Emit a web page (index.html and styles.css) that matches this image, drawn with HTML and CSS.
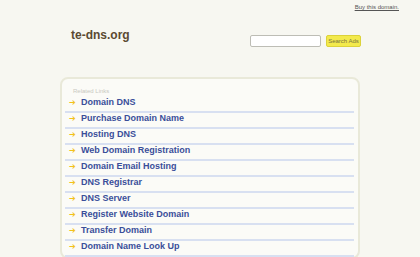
FILE: index.html
```html
<!DOCTYPE html>
<html>
<head>
<meta charset="utf-8">
<link rel="stylesheet" href="styles.css">
</head>
<body>
<div class="topbar"><a href="#" class="buy">Buy this domain.</a></div>
<div class="header">
  <h1 class="title">te-dns.org</h1>
  <form class="search">
    <input class="search-input" type="text">
    <button class="search-btn" type="button">Search Ads</button>
  </form>
</div>
<div class="box">
  <div class="related">Related Links</div>
  <ul class="links">
    <li class="link"><span class="arrow">➔</span><a href="#">Domain DNS</a></li>
    <li class="link"><span class="arrow">➔</span><a href="#">Purchase Domain Name</a></li>
    <li class="link"><span class="arrow">➔</span><a href="#">Hosting DNS</a></li>
    <li class="link"><span class="arrow">➔</span><a href="#">Web Domain Registration</a></li>
    <li class="link"><span class="arrow">➔</span><a href="#">Domain Email Hosting</a></li>
    <li class="link"><span class="arrow">➔</span><a href="#">DNS Registrar</a></li>
    <li class="link"><span class="arrow">➔</span><a href="#">DNS Server</a></li>
    <li class="link"><span class="arrow">➔</span><a href="#">Register Website Domain</a></li>
    <li class="link"><span class="arrow">➔</span><a href="#">Transfer Domain</a></li>
    <li class="link"><span class="arrow">➔</span><a href="#">Domain Name Look Up</a></li>
  </ul>
</div>
</body>
</html>
```
FILE: styles.css
```css
html, body {
  margin: 0;
  padding: 0;
  background: #f7f7f1;
  font-family: "Liberation Sans", Arial, sans-serif;
}
.topbar {
  display: flex;
  justify-content: flex-end;
  padding: 3px 21px 0 0;
  height: 10px;
}
.buy {
  font-size: 6px;
  line-height: 8px;
  color: #555;
  text-decoration: underline;
}
.header {
  width: 300px;
  margin: 0 auto;
  display: flex;
  justify-content: space-between;
  align-items: flex-start;
}
.title {
  margin: 15px 0 0 11px;
  font-size: 12px;
  line-height: 14px;
  font-weight: bold;
  color: #5b4a31;
}
.search {
  display: flex;
  gap: 5px;
  margin: 22px -1px 0 0;
}
.search-input {
  box-sizing: border-box;
  width: 71px;
  height: 12px;
  margin: 0;
  padding: 0;
  border: 1px solid #bdbdb5;
  border-radius: 2px;
  background: #fff;
}
.search-btn {
  box-sizing: border-box;
  width: 35px;
  height: 12px;
  margin: 0;
  padding: 0;
  border: 1px solid #dcd23a;
  border-radius: 2px;
  background: #f3ea4c;
  color: #7a7440;
  font-family: "Liberation Sans", Arial, sans-serif;
  font-size: 6px;
  line-height: 10px;
}
.box {
  box-sizing: border-box;
  width: 300px;
  margin: 30px auto 0;
  border: 2px solid #e9e9d9;
  border-radius: 8px;
  background: #fbfbf7;
  padding: 8px 4px 0 3px;
}
.related {
  font-size: 6px;
  line-height: 8px;
  color: #c9c9c1;
  margin-left: 8px;
}
.links {
  list-style: none;
  margin: 2px 0 0;
  padding: 0;
}
.link {
  display: flex;
  align-items: flex-start;
  height: 14px;
  padding: 0 0 0 4px;
  border-bottom: 2px solid #d8e0f1;
  font-size: 9px;
  line-height: 11px;
  font-weight: bold;
}
.arrow {
  color: #f2c21b;
  font-size: 8px;
  width: 12px;
  font-family: "DejaVu Sans", sans-serif;
}
.link a {
  color: #3a4e9a;
  text-decoration: none;
}
```
